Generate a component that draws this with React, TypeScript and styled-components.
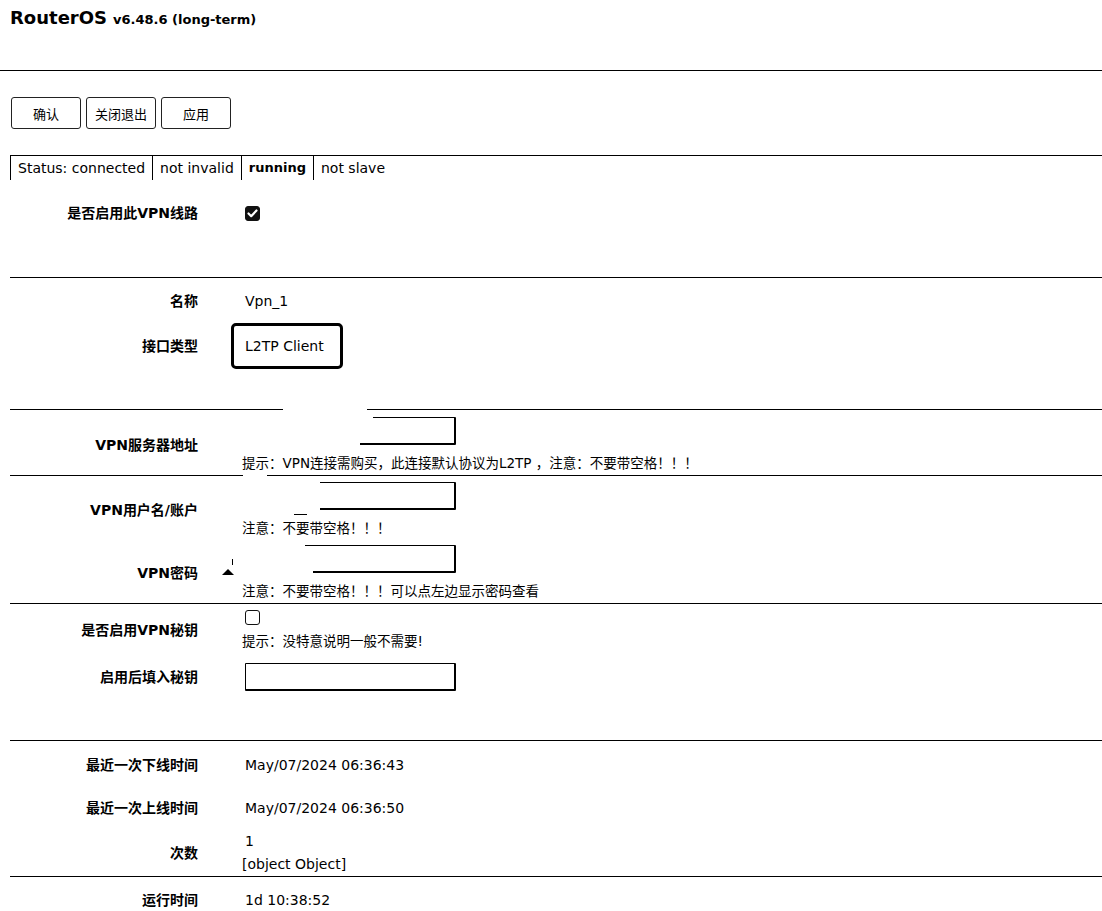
import React from "react";
import styled, { createGlobalStyle } from "styled-components";

const GlobalStyle = createGlobalStyle`
  html, body {
    margin: 0;
    padding: 0;
    background: #fff;
  }
  body {
    font-family: "DejaVu Sans", "Noto Sans CJK SC", sans-serif;
    color: #000;
  }
`;

const Page = styled.div`
  position: relative;
  width: 100%;
  min-height: 911px;
  overflow: hidden;
`;

const Header = styled.header`
  height: 70px;
  padding: 0 10px;
  border-bottom: 1px solid #000;
`;

const Title = styled.h1`
  margin: 0;
  font-size: 18px;
  font-weight: bold;
  line-height: 36px;
  white-space: nowrap;
`;

const Version = styled.span`
  margin-left: 6px;
  font-size: 13px;
`;

const Toolbar = styled.div`
  display: flex;
  gap: 5px;
  margin-top: 26px;
  padding-left: 11px;
`;

const Button = styled.button`
  width: 70px;
  height: 32px;
  padding: 0;
  background: #fff;
  border: 1px solid #222;
  border-radius: 3px;
  font-family: "DejaVu Sans", "Noto Sans CJK SC", sans-serif;
  font-size: 13px;
  color: #000;
`;

const StatusBar = styled.div`
  display: flex;
  margin: 26px 0 0 10px;
  border-top: 1px solid #000;
  height: 24px;
`;

const StatusCell = styled.div<{ $strong?: boolean }>`
  padding: 0 7px;
  border-left: 1px solid #000;
  line-height: 24px;
  font-size: ${(p) => (p.$strong ? "13px" : "14px")};
  font-weight: ${(p) => (p.$strong ? "bold" : "normal")};
  white-space: nowrap;
`;

const Section = styled.section<{ $pt: number; $pb: number; $line?: boolean }>`
  margin-left: 10px;
  padding-top: ${(p) => p.$pt}px;
  padding-bottom: ${(p) => p.$pb}px;
  border-top: ${(p) => (p.$line ? "1px solid #000" : "none")};
  display: flex;
  flex-direction: column;
`;

const Row = styled.div<{ $h?: number; $mt?: number }>`
  display: grid;
  grid-template-columns: 188px 1fr;
  column-gap: 47px;
  align-items: center;
  min-height: ${(p) => p.$h ?? 0}px;
  margin-top: ${(p) => p.$mt ?? 0}px;
`;

const Label = styled.div`
  text-align: right;
  font-size: 14px;
  font-weight: bold;
  line-height: 20px;
  white-space: nowrap;
`;

const Value = styled.div`
  font-size: 14px;
  line-height: 20px;
  white-space: nowrap;
`;

const Stack = styled.div`
  display: flex;
  flex-direction: column;
  align-items: flex-start;
`;

const StackLine = styled.div<{ $shift?: number }>`
  font-size: 14px;
  line-height: 23px;
  margin-left: ${(p) => p.$shift ?? 0}px;
  white-space: nowrap;
`;

const Hint = styled.div`
  margin-left: -3px;
  font-size: 13.5px;
  line-height: 18px;
  white-space: nowrap;
`;

const TextInput = styled.div`
  box-sizing: border-box;
  width: 211px;
  height: 28px;
  margin-bottom: 9px;
  border: 1px solid #000;
  border-right-width: 2px;
  border-bottom-width: 2px;
  border-radius: 1px;
  background: #fff;
`;

const SoloInput = styled(TextInput)`
  margin-bottom: 0;
`;

const SelectBox = styled.div`
  box-sizing: border-box;
  display: flex;
  align-items: center;
  width: 112px;
  height: 46px;
  margin-left: -14px;
  padding-left: 11px;
  border: 3px solid #000;
  border-radius: 5px;
  font-size: 14px;
`;

const Check = styled.span<{ $on?: boolean }>`
  box-sizing: border-box;
  display: flex;
  align-items: center;
  justify-content: center;
  width: 15px;
  height: 15px;
  border: 1px solid #111;
  border-radius: 3px;
  background: ${(p) => (p.$on ? "#111" : "#fff")};
`;

const CheckSpaced = styled(Check)`
  margin-bottom: 7px;
`;

const Mask = styled.div<{ $x: number; $y: number; $w: number; $h: number; $ink?: boolean }>`
  position: absolute;
  left: ${(p) => p.$x}px;
  top: ${(p) => p.$y}px;
  width: ${(p) => p.$w}px;
  height: ${(p) => p.$h}px;
  background: ${(p) => (p.$ink ? "#000" : "#fff")};
`;

const Glyph = styled.svg`
  position: absolute;
  left: 221px;
  top: 557px;
`;

const Tick = () => (
  <svg width="11" height="9" viewBox="0 0 11 9">
    <path d="M1.5 4.5 L4.2 7.2 L9.5 1.5" fill="none" stroke="#fff" strokeWidth="2.2" strokeLinecap="round" strokeLinejoin="round" />
  </svg>
);

export default function App() {
  return (
    <Page>
      <GlobalStyle />
      <Header>
        <Title>
          RouterOS<Version>v6.48.6 (long-term)</Version>
        </Title>
      </Header>

      <Toolbar>
        <Button>确认</Button>
        <Button>关闭退出</Button>
        <Button>应用</Button>
      </Toolbar>

      <StatusBar>
        <StatusCell>Status: connected</StatusCell>
        <StatusCell>not invalid</StatusCell>
        <StatusCell $strong>running</StatusCell>
        <StatusCell>not slave</StatusCell>
      </StatusBar>

      <Section $pt={20} $pb={51}>
        <Row $h={26}>
          <Label>是否启用此VPN线路</Label>
          <Value>
            <Check $on>
              <Tick />
            </Check>
          </Value>
        </Row>
      </Section>

      <Section $line $pt={11} $pb={40}>
        <Row $h={24}>
          <Label>名称</Label>
          <Value>Vpn_1</Value>
        </Row>
        <Row $h={46} $mt={10}>
          <Label>接口类型</Label>
          <Value>
            <SelectBox>L2TP Client</SelectBox>
          </Value>
        </Row>
      </Section>

      <Section $line $pt={7} $pb={3}>
        <Row>
          <Label>VPN服务器地址</Label>
          <Stack>
            <TextInput />
            <Hint>提示：VPN连接需购买，此连接默认协议为L2TP ，注意：不要带空格！！！</Hint>
          </Stack>
        </Row>
      </Section>

      <Section $line $pt={6} $pb={3}>
        <Row>
          <Label>VPN用户名/账户</Label>
          <Stack>
            <TextInput />
            <Hint>注意：不要带空格！！！</Hint>
          </Stack>
        </Row>
        <Row $mt={8}>
          <Label>VPN密码</Label>
          <Stack>
            <TextInput />
            <Hint>注意：不要带空格！！！可以点左边显示密码查看</Hint>
          </Stack>
        </Row>
      </Section>

      <Section $line $pt={6} $pb={49}>
        <Row>
          <Label>是否启用VPN秘钥</Label>
          <Stack>
            <CheckSpaced />
            <Hint>提示：没特意说明一般不需要!</Hint>
          </Stack>
        </Row>
        <Row $mt={13}>
          <Label>启用后填入秘钥</Label>
          <Value>
            <SoloInput />
          </Value>
        </Row>
      </Section>

      <Section $line $pt={11} $pb={0}>
        <Row $h={26}>
          <Label>最近一次下线时间</Label>
          <Value>May/07/2024 06:36:43</Value>
        </Row>
        <Row $h={26} $mt={17}>
          <Label>最近一次上线时间</Label>
          <Value>May/07/2024 06:36:50</Value>
        </Row>
        <Row $mt={9}>
          <Label>次数</Label>
          <Stack>
            <StackLine>1</StackLine>
            <StackLine $shift={-3}>[object Object]</StackLine>
          </Stack>
        </Row>
      </Section>

      <Section $line $pt={11} $pb={0}>
        <Row $h={24}>
          <Label>运行时间</Label>
          <Value>1d 10:38:52</Value>
        </Row>
      </Section>

      {/* redacted areas of the original capture */}
      <Mask $x={283} $y={405} $w={84} $h={11} />
      <Mask $x={243} $y={415} $w={130} $h={15} />
      <Mask $x={243} $y={430} $w={117} $h={17} />
      <Mask $x={243} $y={472} $w={24} $h={6} />
      <Mask $x={243} $y={480} $w={77} $h={33} />
      <Mask $x={294} $y={514} $w={13} $h={1} $ink />
      <Mask $x={236} $y={543} $w={69} $h={17} />
      <Mask $x={236} $y={560} $w={77} $h={17} />
      <Glyph width="14" height="20" viewBox="0 0 14 20">
        <rect x="11" y="2" width="1" height="6" fill="#000" />
        <path d="M1 18 L7 12 L13 18 Z" fill="#000" />
      </Glyph>
    </Page>
  );
}
